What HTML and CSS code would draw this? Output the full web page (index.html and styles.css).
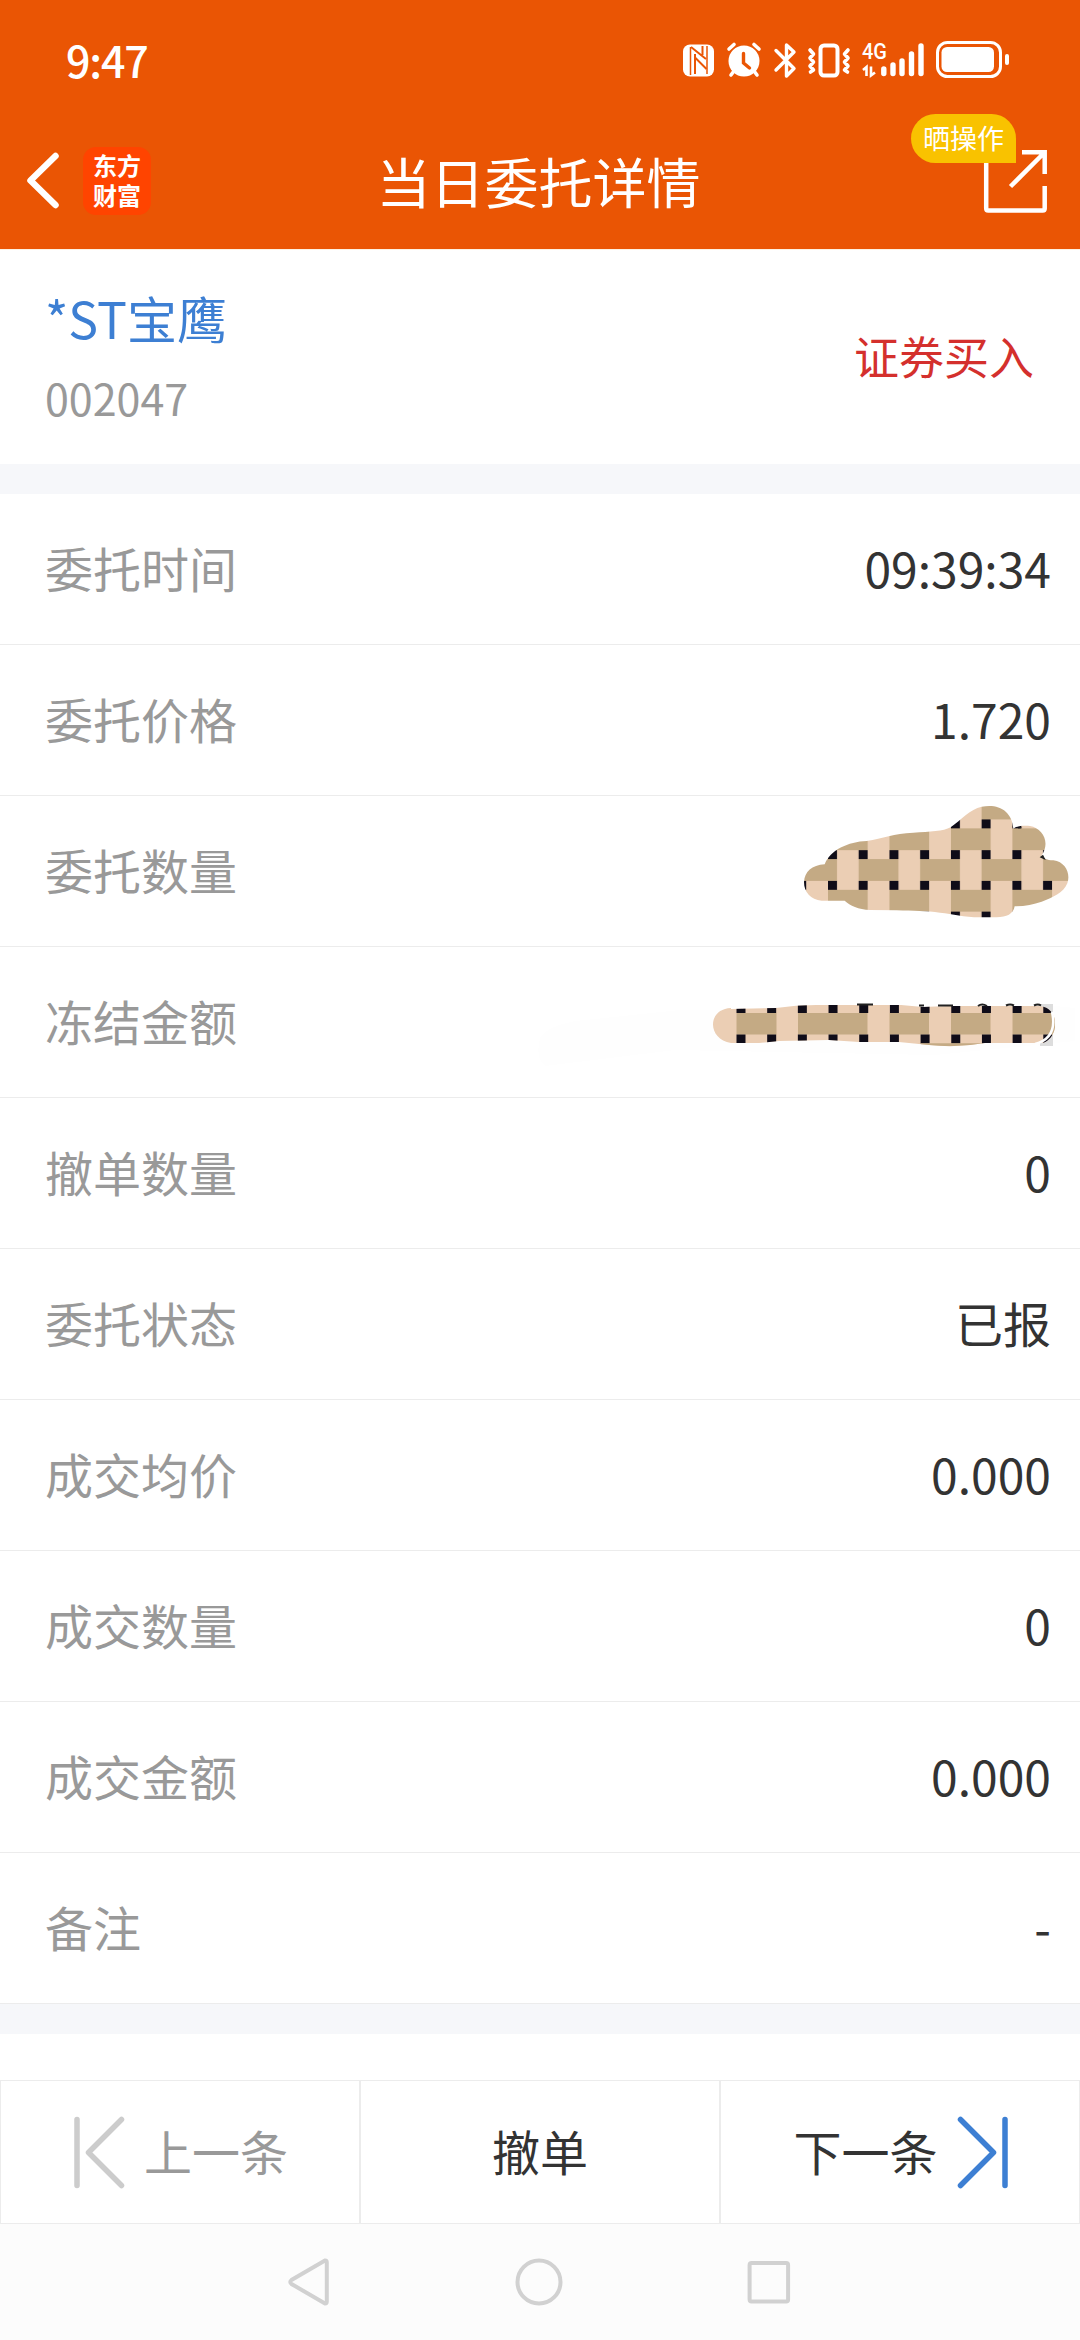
FILE: index.html
```html
<!DOCTYPE html>
<html lang="zh-CN">
  <head>
    <meta charset="UTF-8" />
    <meta name="viewport" content="width=device-width, initial-scale=1.0" />
    <title>当日委托详情</title>
    <link rel="stylesheet" href="styles.css">
  </head>
  <body>
    <header class="header">
      <div class="status-bar">
        <span class="time">9:47</span>
        <svg class="status-icons" viewBox="680 36 334 46" width="334" height="46">
          <!-- nfc -->
          <rect x="683" y="44.500" width="31" height="32" rx="7" fill="#fff" />
          <path d="M690.500 47v28M707 46v28" stroke="#ea5504" stroke-width="1.500" fill="none" />
          <path d="M691 47l15 12M695 54v20M702.500 46v9M694.500 57l12 12" stroke="#ea5504" stroke-width="2" fill="none" />
          <!-- alarm -->
          <circle cx="744" cy="61" r="15.500" fill="#fff" />
          <path d="M729 49l5-4.500M759 49l-5-4.500M734 71l-3 4M754 71l3 4" stroke="#fff" stroke-width="3.600" stroke-linecap="round" />
          <path d="M743.500 53.500v9.500l6 5" stroke="#ea5504" stroke-width="3.400" stroke-linecap="round" fill="none" />
          <!-- bluetooth -->
          <path d="M776 50.500l18 18-7.500 7.500V45l7.500 7-18 18" stroke="#fff" stroke-width="3.400" stroke-linecap="round" stroke-linejoin="round" fill="none" />
          <!-- vibrate -->
          <rect x="820.500" y="45.500" width="17" height="30" rx="3.500" stroke="#fff" stroke-width="4" fill="none" />
          <path d="M810 50l3.500 4-3.500 4 3.500 4-3.500 4 3.500 4-3 2M848 50l-3.500 4 3.500 4-3.500 4 3.500 4-3.500 4 3 2" stroke="#fff" stroke-width="3.600" stroke-linecap="round" stroke-linejoin="round" fill="none" />
          <!-- signal -->
          <text class="net" x="862" y="59" textLength="25" lengthAdjust="spacingAndGlyphs">4G</text>
          <path d="M863 70l3.500-3v9M871 66.500v9l4-3" stroke="#fff" stroke-width="2.600" fill="none" />
          <path d="M883.800 69v4.500M893 65v8.500M902 61v12.500M911.500 54v19.500M921 46v27.500" stroke="#fff" stroke-width="5.400" stroke-linecap="round" />
          <!-- battery -->
          <rect x="937.500" y="42.500" width="63" height="34" rx="10" stroke="#fff" stroke-width="3" fill="none" />
          <rect x="941.500" y="47" width="52.500" height="25" rx="5.500" fill="#fff" />
          <path d="M1007 56v7" stroke="#fff" stroke-width="4" stroke-linecap="round" />
        </svg>
      </div>
      <div class="title-bar">
        <div class="nav-left">
          <svg viewBox="24 150 38 64" width="38" height="64">
            <path d="M55.500 157L30.500 181.500l25 24.500" stroke="#fff" stroke-width="6.500" stroke-linecap="round" stroke-linejoin="round" fill="none" />
          </svg>
          <div class="logo">东方<br />财富</div>
        </div>
        <h1>当日委托详情</h1>
        <div class="share">
          <svg viewBox="982 146 68 70" width="68" height="70">
            <path d="M986.200 150v58.500q0 2 2 2h54.500q2 0 2-2V186" stroke="#fff" stroke-width="4.500" fill="none" />
            <path d="M1022 152.300h22.700V174M1010.500 186.500l34-34" stroke="#fff" stroke-width="4.500" fill="none" />
          </svg>
          <span class="badge">晒操作</span>
        </div>
      </div>
    </header>

    <section class="stock">
      <div>
        <div class="stock-name">*ST宝鹰</div>
        <div class="stock-code">002047</div>
      </div>
      <div class="side">证券买入</div>
    </section>

    <section class="details">
      <div class="row"><span>委托时间</span><b>09:39:34</b></div>
      <div class="row"><span>委托价格</span><b>1.720</b></div>
      <div class="row">
        <span>委托数量</span>
        <svg class="mask" viewBox="0 18 900 450" width="300" height="150">
          <defs>
            <pattern id="weave" x="144" y="180.500" width="184.400" height="184.400" patternUnits="userSpaceOnUse">
              <rect width="184.400" height="184.400" fill="#ebceb4" />
              <path d="M0 27h27v65H0zM92 27h92.400v65H92zM0 119h119v65.400H0z" fill="#c4aa84" />
              <path d="M0 0h27v27H0zM92 0h27v27H92zM0 92h27v27H0zM92 92h27v27H92z" fill="#0f0c18" />
            </pattern>
          </defs>
          <path d="M72 276C74 246 95 225 134 223C150 180 205 155 260 153C310 145 340 131 400 128C450 125 490 124 512 112C545 88 570 58 605 50C655 40 696 62 700 116C712 107 735 106 750 108C788 115 812 156 785 196C790 206 800 211 820 211C858 216 872 252 862 280C851 308 820 322 785 335C760 343 735 349 704 349C700 372 680 382 650 382H600C550 382 520 371 480 368C440 363 400 363 350 361L270 360C235 358 210 347 194 332H125C92 330 72 306 72 276Z" fill="url(#weave)" />
          <path d="M713 116l8-5 5 3M779 202l10-8 8 16z" fill="#222" />
        </svg>
      </div>
      <div class="row">
        <span>冻结金额</span>
        <svg class="mask" viewBox="520 947 560 150" width="560" height="150">
          <path d="M540 1038q10-16 55-19l85-9 375-4 20 2v33l-140 14-260-5-130 16q-10-8-5-28z" fill="#fefefe" />
          <path d="M1040 1004h13v42h-13z" fill="#ddd" />
          <clipPath id="stroke">
            <path d="M731 1009l45-1q20-3 40-3h85l22 2 25-1h90c22 0 22 31 5 37H985q-28 5-56 2l-30-3h-40l-30-2-50 1-20 2h-28c-24-4-24-34 0-35z" />
          </clipPath>
          <g clip-path="url(#stroke)">
            <path d="M710 1000h345v50H710z" fill="#ebceb4" />
            <path d="M736.500 1013h40v21.500h-40zM798 1013h69.500v21.500H798zM889.500 1013H929v21.500h-39.500zM951 1013h39.500v21.500H951zM1012.500 1013H1055v21.500h-42.500z" fill="#c4aa84" />
            <path d="M736.500 1008.500H1060M736.500 1039H1060" stroke="#0f0c18" stroke-width="9" stroke-dasharray="9 21.680" />
            <path d="M745 1043.300h33v3h-33zM921 1043.300h62v3h-62z" fill="#c4aa84" />
          </g>
          <path d="M857 1004.500h16M919 1005.500h5M938 1005.500h15M978 1006q4-3 9 0M1006 1005.500q4-2 8 0M1034 1005.500q4-2 7 0" stroke="#222" stroke-width="2" fill="none" />
          <path d="M1052 1012q6 26-17 32" stroke="#fff" stroke-width="2.500" fill="none" />
        </svg>
      </div>
      <div class="row"><span>撤单数量</span><b>0</b></div>
      <div class="row"><span>委托状态</span><b>已报</b></div>
      <div class="row"><span>成交均价</span><b>0.000</b></div>
      <div class="row"><span>成交数量</span><b>0</b></div>
      <div class="row"><span>成交金额</span><b>0.000</b></div>
      <div class="row"><span>备注</span><b>-</b></div>
    </section>

    <section class="actions">
      <button class="prev" disabled>
        <svg viewBox="72 2114 54 75" width="54" height="75">
          <path d="M77 2118.500v66M121.500 2118.500L88.500 2151.500l33 33" stroke="#ccc" stroke-width="5.500" stroke-linecap="round" stroke-linejoin="round" fill="none" />
        </svg>
        <span>上一条</span>
      </button>
      <button><span>撤单</span></button>
      <button class="next">
        <span>下一条</span>
        <svg viewBox="954 2114 54 75" width="54" height="75">
          <path d="M1003 2118.500v66M958.500 2118.500l33 33-33 33" stroke="#3d7fd3" stroke-width="5.500" stroke-linecap="round" stroke-linejoin="round" fill="none" />
        </svg>
      </button>
    </section>

    <nav class="system-nav">
      <svg viewBox="284 2256 50 52" width="50" height="52">
        <path d="M325 2260.500L291.500 2280q-2.500 2 0 4L325 2303.500q1.800 0 1.800-2v-39q0-2-1.800-2z" />
      </svg>
      <svg viewBox="515 2256 50 52" width="50" height="52">
        <circle cx="540" cy="2282" r="21.500" />
      </svg>
      <svg viewBox="744 2256 50 52" width="50" height="52">
        <rect x="749.600" y="2263" width="38.500" height="38.500" rx="2" />
      </svg>
    </nav>
  </body>
</html>
```

FILE: styles.css
```css
* {
  margin: 0;
  padding: 0;
  box-sizing: border-box;
}

body {
  width: 1080px;
  height: 2340px;
  display: flex;
  flex-direction: column;
  overflow: hidden;
  background: #fff;
  color: #333;
  font-family: "Noto Sans CJK SC", sans-serif;
}

svg {
  display: block;
  flex: none;
}

.header {
  height: 249px;
  background: #ea5504;
  color: #fff;
}

.status-bar {
  height: 118px;
  padding: 0 66px 0 66px;
  display: flex;
  justify-content: space-between;
  align-items: center;
}

.time {
  font-size: 43px;
  font-weight: 500;
  line-height: 60px;
  letter-spacing: -1.2px;
}

.net {
  font-family: Roboto, sans-serif;
  font-size: 22px;
  font-weight: 500;
  fill: #fff;
}

.title-bar {
  height: 131px;
  padding: 0 30px 5px 24px;
  display: grid;
  grid-template-columns: 1fr auto 1fr;
  align-items: center;
}

.nav-left {
  display: flex;
  align-items: center;
  gap: 21px;
}

.logo {
  width: 68px;
  height: 68px;
  padding-top: 3px;
  border-radius: 13px;
  background: #ff4400;
  font-size: 24px;
  font-weight: 700;
  line-height: 30px;
  text-align: center;
}

h1 {
  padding-left: 3px;
  font-size: 54px;
  font-weight: 400;
  line-height: 76px;
}

.share {
  position: relative;
  justify-self: end;
}

.badge {
  position: absolute;
  right: 34px;
  bottom: 53px;
  width: 105px;
  height: 49px;
  border-radius: 25px 25px 0 25px;
  background: #f9c200;
  font-size: 27px;
  line-height: 48px;
  text-align: center;
  white-space: nowrap;
}

.stock {
  height: 215px;
  padding: 0 46px 0 45px;
  border-top: 1px solid #fdf1e2;
  display: flex;
  justify-content: space-between;
  align-items: center;
}

.stock-name {
  color: #3d7fd3;
  font-size: 50px;
  line-height: 80px;
}

.stock-code {
  color: #999;
  font-size: 43px;
  line-height: 80px;
}

.side {
  padding-bottom: 3px;
  color: #d4302d;
  font-size: 45px;
}

.details {
  height: 1570px;
  border: solid #f6f7fa;
  border-width: 30px 0;
  display: grid;
  grid-template-rows: repeat(10, 1fr);
}

.row {
  padding: 0 29px 0 45px;
  border-bottom: 1px solid #ececec;
  display: flex;
  justify-content: space-between;
  align-items: center;
  overflow: hidden;
  font-size: 48px;
  line-height: 70px;
}

.row span {
  padding-bottom: 5px;
  color: #999;
}

.row b {
  padding-bottom: 5px;
  font-weight: 400;
}

.mask {
  margin-right: -29px;
}

.actions {
  height: 144px;
  margin-top: 46px;
  display: grid;
  grid-template-columns: repeat(3, 1fr);
}

.actions button {
  border: 1px solid #ececec;
  background: #fff;
  color: #333;
  font-family: inherit;
  font-size: 48px;
  display: flex;
  justify-content: center;
  align-items: center;
  gap: 18px;
}

.actions span {
  padding-bottom: 5px;
}

.actions .prev {
  color: #999;
}

.actions .next {
  padding-left: 3px;
}

.system-nav {
  flex: 1;
  padding: 0 286px 0 284px;
  background: #fcfcfc;
  display: flex;
  justify-content: space-between;
  align-items: center;
}

.system-nav svg {
  fill: none;
  stroke: #d1d1d1;
  stroke-width: 4;
}
```
